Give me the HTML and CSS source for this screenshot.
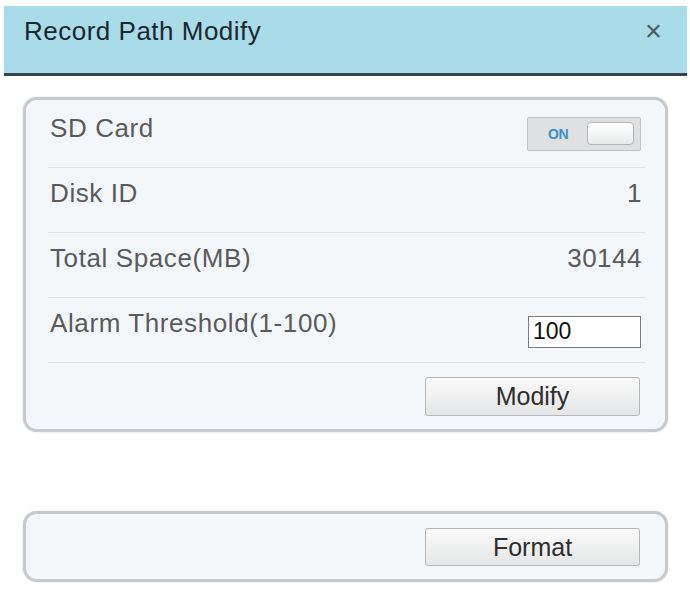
FILE: index.html
```html
<!DOCTYPE html>
<html lang="en">
<head>
    <meta charset="UTF-8">
    <title>Record Path Modify</title>
    <link rel="stylesheet" href="styles.css">
</head>
<body>
    <div class="dialog">
        <div class="header">
            <h1 class="title">Record Path Modify</h1>
            <span class="close">&times;</span>
        </div>

        <div class="panel">
            <div class="row">
                <span class="label">SD Card</span>
                <div class="toggle">
                    <span class="toggleText">ON</span>
                    <span class="knob"></span>
                </div>
            </div>
            <div class="row">
                <span class="label">Disk ID</span>
                <span class="value">1</span>
            </div>
            <div class="row">
                <span class="label">Total Space(MB)</span>
                <span class="value">30144</span>
            </div>
            <div class="row">
                <span class="label">Alarm Threshold(1-100)</span>
                <input class="threshold" type="text" value="100">
            </div>
            <div class="buttonRow">
                <button class="btn" type="button">Modify</button>
            </div>
        </div>

        <div class="panel panelFormat">
            <div class="buttonRow">
                <button class="btn" type="button">Format</button>
            </div>
        </div>
    </div>
</body>
</html>
```

FILE: styles.css
```css
body{
    margin: 0;
    background-color: #fff;
    font-family: "Liberation Sans", Arial, sans-serif;
    color: #5a5a5a;
}

.dialog{
    width: 690px;
    height: 590px;
    padding-top: 6px;
    box-sizing: border-box;
}

.header{
    margin: 0 3px 0 4px;
    height: 70px;
    box-sizing: border-box;
    background-color: #a9dbe8;
    border-bottom: 3px solid #37464e;
    display: flex;
    justify-content: space-between;
    align-items: flex-start;
    padding: 8px 25px 0 20px;
}

.title{
    margin: 0;
    font-size: 26px;
    font-weight: normal;
    color: #1a2830;
    line-height: 34px;
    letter-spacing: 0.5px;
}

.close{
    font-size: 29px;
    line-height: 34px;
    color: #4a5b66;
}

.panel{
    margin: 21px 0 0 23px;
    width: 645px;
    box-sizing: border-box;
    border: 3px solid #c6c9cd;
    border-radius: 14px;
    background-color: #f4f7fa;
    padding: 3px 20px 0 22px;
    box-shadow: 0 0 2px #d4d6d8;
}

.row{
    height: 65px;
    box-sizing: border-box;
    border-bottom: 1px solid #dfe3e7;
    padding: 0 4px 7px 2px;
    display: flex;
    justify-content: space-between;
    align-items: center;
    font-size: 26px;
}

.label,
.value{
    letter-spacing: 0.6px;
    margin-bottom: 6px;
}

.value{
    letter-spacing: 0.5px;
    margin-right: -1px;
}

.toggle{
    width: 114px;
    height: 34px;
    box-sizing: border-box;
    border: 1px solid #bfc1c3;
    border-radius: 2px;
    background-color: #dfe0e1;
    display: flex;
    justify-content: space-between;
    align-items: center;
    padding: 0 6px 0 20px;
    margin-top: 4px;
}

.toggleText{
    font-size: 14px;
    font-weight: bold;
    color: #3b8ec8;
    letter-spacing: -0.5px;
}

.knob{
    width: 47px;
    height: 23px;
    box-sizing: border-box;
    border: 1px solid #b3b5b7;
    border-radius: 4px;
    background: linear-gradient(#ffffff, #e9eaeb);
}

.threshold{
    width: 113px;
    height: 32px;
    box-sizing: border-box;
    border: 1px solid #7a7a7a;
    background-color: #fff;
    font-family: "Liberation Sans", Arial, sans-serif;
    font-size: 23px;
    color: #111;
    padding: 0 4px;
    margin-top: 10px;
}

.buttonRow{
    display: flex;
    justify-content: flex-end;
    padding: 14px 5px 13px 0;
}

.btn{
    width: 215px;
    height: 39px;
    border: 1px solid #b4b6b8;
    border-radius: 3px;
    background: linear-gradient(#fbfbfb, #e4e5e6);
    font-family: "Liberation Sans", Arial, sans-serif;
    font-size: 25px;
    color: #2e2e2e;
    cursor: pointer;
}

.panelFormat{
    margin-top: 79px;
    padding-top: 0;
}

.panelFormat .buttonRow{
    padding: 14px 5px 13px 0;
}

.panelFormat .btn{
    height: 38px;
}
```
